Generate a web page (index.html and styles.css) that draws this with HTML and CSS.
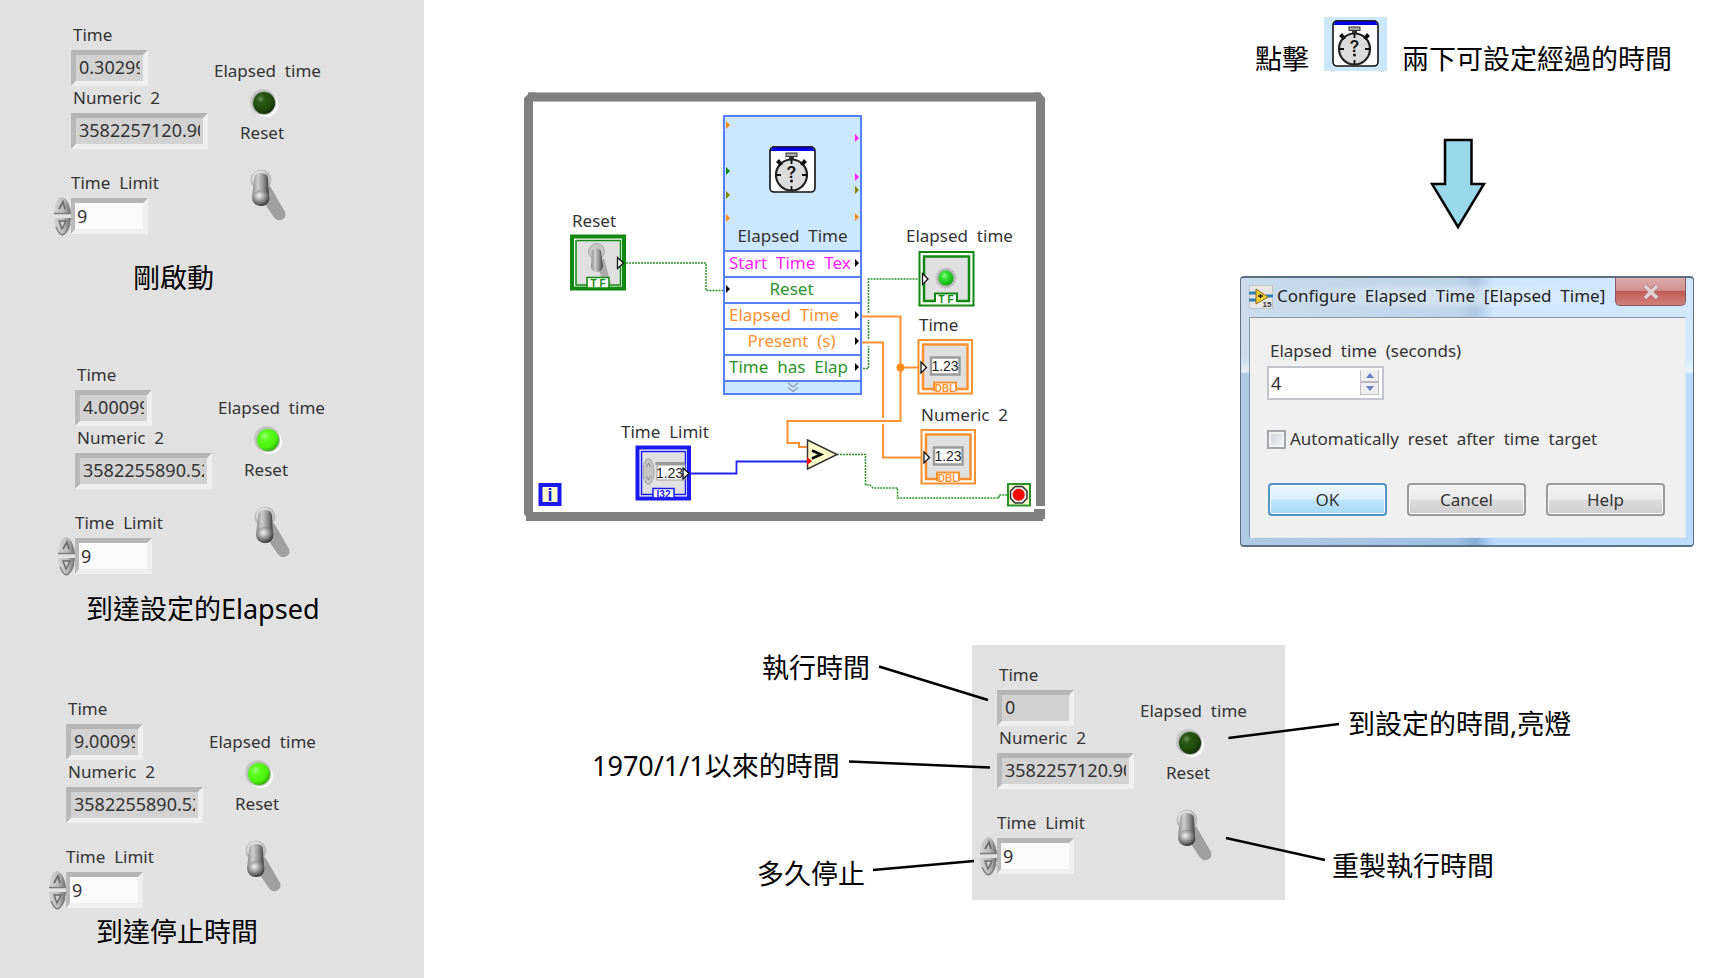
FILE: index.html
```html
<!DOCTYPE html>
<html lang="zh-Hant">
<head>
<meta charset="utf-8">
<title>Elapsed Time</title>
<link rel="stylesheet" href="styles.css">
</head>
<body>
<svg class="defs" aria-hidden="true">
  <defs>
    <radialGradient id="led-off" cx="0.35" cy="0.32" r="0.7">
      <stop offset="0" stop-color="#6f9460"/><stop offset="0.25" stop-color="#2c5a18"/><stop offset="0.7" stop-color="#1f4a0c"/><stop offset="1" stop-color="#12300a"/>
    </radialGradient>
    <radialGradient id="led-on" cx="0.35" cy="0.32" r="0.7">
      <stop offset="0" stop-color="#9cff7a"/><stop offset="0.3" stop-color="#5cff1e"/><stop offset="0.75" stop-color="#4bf00c"/><stop offset="1" stop-color="#33b808"/>
    </radialGradient>
    <radialGradient id="led-node" cx="0.4" cy="0.35" r="0.65">
      <stop offset="0" stop-color="#8cff8c"/><stop offset="0.4" stop-color="#2ee02e"/><stop offset="1" stop-color="#14a814"/>
    </radialGradient>
    <linearGradient id="lever" x1="0" x2="1" y1="0" y2="0">
      <stop offset="0" stop-color="#8a8a8a"/><stop offset="0.35" stop-color="#cfcfcf"/><stop offset="0.7" stop-color="#8c8c8c"/><stop offset="1" stop-color="#3c3c3c"/>
    </linearGradient>
    <radialGradient id="lever-tip" cx="0.4" cy="0.35" r="0.65">
      <stop offset="0" stop-color="#f4f4f4"/><stop offset="0.5" stop-color="#9a9a9a"/><stop offset="1" stop-color="#3a3a3a"/>
    </radialGradient>
    <linearGradient id="knob" x1="0" x2="1" y1="0" y2="0">
      <stop offset="0" stop-color="#d4d4d4"/><stop offset="0.55" stop-color="#bcbcbc"/><stop offset="1" stop-color="#6a6a6a"/>
    </linearGradient>
    <symbol id="led-dark" viewBox="0 0 32 32">
      <circle cx="15" cy="15" r="13" fill="#c6c6c6"/><circle cx="18" cy="18" r="12" fill="#fafafa"/><circle cx="16" cy="16" r="12" fill="#b0b0b0"/><circle cx="16" cy="16" r="11" fill="url(#led-off)"/>
    </symbol>
    <symbol id="led-lit" viewBox="0 0 32 32">
      <circle cx="15" cy="15" r="13" fill="#c6c6c6"/><circle cx="18" cy="18" r="12" fill="#fafafa"/><circle cx="16" cy="16" r="12" fill="#b0b8ac"/><circle cx="16" cy="16" r="11" fill="url(#led-on)"/>
    </symbol>
    <symbol id="switch" viewBox="0 0 40 56">
      <path d="M17 20 L21 18 L36 44 Q38 50 32 52 Q27 53 24 48 L14 33 Z" fill="#9f9f9f"/>
      <circle cx="12" cy="12" r="10.500" fill="#bdbdbd"/>
      <circle cx="11" cy="10.500" r="8" fill="#dcdcdc"/>
      <path d="M5 11 Q5 5 12 5 Q19 5 19 11 L20 29 Q20 38 12 38 Q3 38 3 29 Z" fill="url(#lever)"/>
      <ellipse cx="12" cy="30" rx="8.500" ry="8" fill="url(#lever-tip)"/>
    </symbol>
    <symbol id="spin" viewBox="0 0 18 40">
      <path d="M9 1 C14 2 17 9 18 18 H1 C1 9 4 2 9 1 Z" fill="url(#knob)"/>
      <path d="M1 22 H18 C17 31 14 38 9 39 C4 38 1 31 1 22 Z" fill="url(#knob)"/>
      <path d="M6 13 L10 6 L12 13" fill="none" stroke="#6b6b6b" stroke-width="1.8"/>
      <path d="M13 25 L9 33 L6 25 Z" fill="#d0d0d0" stroke="#6b6b6b" stroke-width="1.5"/>
      <path d="M1 17.500 H18 M3 31 Q6 38 9 39 Q14 38 17 28" fill="none" stroke="#7d7d7d" stroke-width="1.300"/>
    </symbol>
    <symbol id="stopwatch" viewBox="0 0 47 47">
      <rect x="1" y="1" width="45" height="45" rx="4" fill="#fff" stroke="#111" stroke-width="1.6"/>
      <path d="M3.5 1 H43.5 L45.5 5 H1.500 Z" fill="#0000e6"/>
      <path d="M3 1 H44" stroke="#111" stroke-width="1"/>
      <rect x="17" y="7" width="11" height="3.500" fill="#aaa" stroke="#333"/>
      <path d="M22.500 10 V14" stroke="#333" stroke-width="5"/>
      <circle cx="22.500" cy="29" r="15.500" fill="#dcdcdc" stroke="#222" stroke-width="2.200"/>
      <path d="M22.500 14 V18 M22.500 40 V44 M7 29 H12 M33 29 H38" stroke="#111" stroke-width="1.800"/>
      <path d="M7 16 L10 13 L14 18 L11 20 Z M38 16 L35 13 L31 18 L34 20 Z" fill="#111"/>
      <text x="22.500" y="32" class="watch-mark">?</text>
      <circle cx="22.500" cy="35" r="1.500" fill="#111"/>
    </symbol>
  </defs>
</svg>

<div class="page">
  <aside class="states">
    <section class="state state-start">
      <div class="cluster">
        <div class="fields">
          <span class="label">Time</span><output class="readout short"><span>0.30299</span></output>
          <span class="label">Numeric  2</span><output class="readout"><span>3582257120.90</span></output>
          <label class="label limit" for="limit1">Time  Limit</label>
          <svg class="spin"><use href="#spin"/></svg><input class="entry" id="limit1" value="9">
        </div>
        <div class="lamps">
          <span class="label">Elapsed  time</span><svg class="led"><use href="#led-dark"/></svg>
          <span class="label reset">Reset</span><button class="toggle" aria-label="Reset"><svg><use href="#switch"/></svg></button>
        </div>
      </div>
      <p class="note">剛啟動</p>
    </section>

    <section class="state state-elapsed">
      <div class="cluster">
        <div class="fields">
          <span class="label">Time</span><output class="readout short"><span>4.00099</span></output>
          <span class="label">Numeric  2</span><output class="readout"><span>3582255890.52</span></output>
          <label class="label limit" for="limit2">Time  Limit</label>
          <svg class="spin"><use href="#spin"/></svg><input class="entry" id="limit2" value="9">
        </div>
        <div class="lamps">
          <span class="label">Elapsed  time</span><svg class="led"><use href="#led-lit"/></svg>
          <span class="label reset">Reset</span><button class="toggle" aria-label="Reset"><svg><use href="#switch"/></svg></button>
        </div>
      </div>
      <p class="note">到達設定的Elapsed</p>
    </section>

    <section class="state state-stop">
      <div class="cluster">
        <div class="fields">
          <span class="label">Time</span><output class="readout short"><span>9.00099</span></output>
          <span class="label">Numeric  2</span><output class="readout"><span>3582255890.52</span></output>
          <label class="label limit" for="limit3">Time  Limit</label>
          <svg class="spin"><use href="#spin"/></svg><input class="entry" id="limit3" value="9">
        </div>
        <div class="lamps">
          <span class="label">Elapsed  time</span><svg class="led"><use href="#led-lit"/></svg>
          <span class="label reset">Reset</span><button class="toggle" aria-label="Reset"><svg><use href="#switch"/></svg></button>
        </div>
      </div>
      <p class="note">到達停止時間</p>
    </section>
  </aside>

  <main class="main">
    <section class="diagram">
      <svg class="wires" viewBox="524 92 521 429">
        <path d="M528.500 100 V514 M526 516.500 H1032 M528 97 H1041 M1040.500 100 V506" stroke="#808080" stroke-width="9" fill="none"/>
        <path d="M524 98 L530 92.500 H536 V101 H533 V106 H524 Z M1045 98 L1040 92.500 H1034 V101 H1036 V106 H1045 Z M524 514 L530 521 H536 V512 H524 Z" fill="#808080"/>
        <path d="M1032 512 H1034 V509 H1045 V519 H1043 V521 H1032 Z" fill="#808080"/>

        <g fill="none" stroke="#2b942b" stroke-width="1.500" stroke-dasharray="2 1">
          <path d="M626 263 H706 V290.500 H723"/>
          <path d="M863 368.500 H868.500 V346 M868.500 339 V320 M868.500 313 V279 H918"/>
          <path d="M837 454.500 H865.500 V485 H870 L873 488 H897.500 V498 H999 V495 H1007"/>
        </g>
        <g fill="none" stroke="#ff9130" stroke-width="2">
          <path d="M862 316.500 H900.500 V421 H787.500 V443 H799 V447 H808"/>
          <path d="M862 342.500 H883 V418 M883 424 V457.500 H921 M900 367.500 H918"/>
        </g>
        <circle cx="900.500" cy="367.500" r="4" fill="#ff8a1c"/>
        <path d="M690 473.500 H736.500 V461.500 H808" fill="none" stroke="#2424f0" stroke-width="1.800"/>
        <path d="M807.500 440 L837 454.500 L807.500 469 Z" fill="#ffffcc" stroke="#333" stroke-width="1.500"/>
        <path d="M812 450.500 L821 454.500 L812 458.500" fill="none" stroke="#000" stroke-width="2.500"/>
        <path d="M807 457 L812 461 L807 465 Z" fill="#f00"/>

        <g><rect x="572" y="236.500" width="52" height="52" fill="#fff" stroke="#118811" stroke-width="4"/>
          <rect x="576" y="240.500" width="44.500" height="44.500" fill="#e0e0e0" stroke="#118811" stroke-width="1.500"/>
          <path d="M598 266 L604 258 L611 284 H603 Z" fill="#aaa"/>
          <circle cx="596.500" cy="251.500" r="8" fill="#c6c6c6" stroke="#aaa"/><path d="M592 251 Q597 245 601 251 L603 266 Q602 272 597 272 Q591 272 591 266 Z" fill="url(#lever)"/>
          <path d="M587 288 V277.500 H609 V288 Z" fill="#fff" stroke="#118811" stroke-width="1.500"/><text x="598" y="287" class="tag green">T F</text>
          <path d="M617.500 257.500 L623.500 263 L617.500 268.500 Z" fill="#fff" stroke="#111" stroke-width="1.300"/>
        </g>
        <g><rect x="919.500" y="252" width="54" height="53.500" fill="#fff" stroke="#118811" stroke-width="2"/>
          <rect x="924" y="256.500" width="45" height="44.500" fill="#e0e0e0" stroke="#118811" stroke-width="2.500"/>
          <circle cx="946" cy="278" r="9.500" fill="#b4b4b4" stroke="#bcbcbc" stroke-width="2" stroke-dasharray="2 1"/><circle cx="946" cy="278" r="7.500" fill="url(#led-node)"/>
          <path d="M935 303 V293 H957 V303 Z" fill="#fff"/><path d="M935 302 V293.500 H957 V302" fill="none" stroke="#118811" stroke-width="2"/><text x="946" y="303" class="tag green">T F</text>
          <path d="M922.500 273.500 L928 279 L922.500 284.500 Z" fill="#fff" stroke="#111" stroke-width="1.300"/>
        </g>
        <g><rect x="918.500" y="340" width="53.500" height="53.500" fill="#fff" stroke="#ff9130" stroke-width="2"/>
          <rect x="923" y="344.500" width="44.500" height="44.500" fill="#e0e0e0" stroke="#ff9130" stroke-width="2.500"/>
          <rect x="931" y="357.500" width="28.500" height="17" fill="#fff" stroke="#9b9b9b" stroke-width="2.500"/><text x="945" y="371" class="digits">1.23</text>
          <path d="M934 391 V382.500 H956 V391" fill="#fff" stroke="#ff9130" stroke-width="2"/><text x="945" y="391.500" class="tag orange">DBL</text>
          <path d="M921 362 L926.500 367.500 L921 373 Z" fill="#fff" stroke="#111" stroke-width="1.300"/>
        </g>
        <g transform="translate(3 90)"><rect x="918.500" y="340" width="53.500" height="53.500" fill="#fff" stroke="#ff9130" stroke-width="2"/>
          <rect x="923" y="344.500" width="44.500" height="44.500" fill="#e0e0e0" stroke="#ff9130" stroke-width="2.500"/>
          <rect x="931" y="357.500" width="28.500" height="17" fill="#fff" stroke="#9b9b9b" stroke-width="2.500"/><text x="945" y="371" class="digits">1.23</text>
          <path d="M934 391 V382.500 H956 V391" fill="#fff" stroke="#ff9130" stroke-width="2"/><text x="945" y="391.500" class="tag orange">DBL</text>
          <path d="M921 362 L926.500 367.500 L921 373 Z" fill="#fff" stroke="#111" stroke-width="1.300"/>
        </g>
        <g><rect x="637.500" y="447.500" width="51.500" height="51" fill="#fff" stroke="#1a1af0" stroke-width="4"/>
          <rect x="641.500" y="451.500" width="44" height="43" fill="#e0e0e0" stroke="#1a1af0" stroke-width="1.500"/>
          <ellipse cx="648.500" cy="471.500" rx="5.500" ry="13" fill="#c4c4c4" stroke="#a6a6a6"/><path d="M646.500 467 L648.500 463 L650.500 467 M646.500 476 L648.500 480 L650.500 476" fill="none" stroke="#888"/>
          <path d="M655.500 463.500 H685" stroke="#9b9b9b" stroke-width="3"/><rect x="657" y="465" width="28" height="15" fill="#fff" stroke="#9b9b9b"/><text x="669.500" y="477.500" class="digits">1.23</text>
          <path d="M653 498 V488.500 H674 V498 Z" fill="#fff" stroke="#1a1af0" stroke-width="1.500"/><text x="663.500" y="497.500" class="tag blue">I32</text>
          <path d="M683 468 L689 473.500 L683 479 Z" fill="#fff" stroke="#111" stroke-width="1.300"/>
        </g>
        <rect x="540.500" y="485" width="19" height="19" fill="#ffffcc" stroke="#1a1af0" stroke-width="4"/><text x="550" y="500.500" class="index">i</text>
        <rect x="1008" y="484" width="22" height="21.500" fill="#ffffd0" stroke="#2b942b" stroke-width="2"/>
        <path d="M1015 486.500 H1022.500 L1027 491 V498.500 L1022.500 503 H1015 L1010.500 498.500 V491 Z" fill="#e6e6e6" stroke="#333" stroke-width="1.500"/><circle cx="1018.700" cy="494.700" r="6" fill="#f00"/>
      </svg>

      <span class="label node-reset">Reset</span>
      <span class="label node-limit">Time  Limit</span>
      <span class="label node-elapsed">Elapsed  time</span>
      <span class="label node-time">Time</span>
      <span class="label node-numeric">Numeric  2</span>

      <div class="vi">
        <div class="vi-head">
          <svg class="vi-icon"><use href="#stopwatch"/></svg>
          <span class="label">Elapsed  Time</span>
        </div>
        <div class="vi-row magenta"><span>Start  Time  Tex</span></div>
        <div class="vi-row green mid"><span>Reset</span></div>
        <div class="vi-row orange"><span>Elapsed  Time</span></div>
        <div class="vi-row orange mid"><span>Present  (s)</span></div>
        <div class="vi-row green"><span>Time  has  Elap</span></div>
        <div class="vi-foot"><svg viewBox="0 0 12 11"><path d="M1 1 L6 5 L11 1 M1 5.500 L6 9.500 L11 5.500" fill="none" stroke="#8fa3b5" stroke-width="1.500"/></svg></div>
        <svg class="vi-pins" viewBox="723 115 139 279">
          <path d="M726 121 L730 125 L726 129 Z M726 214 L730 218 L726 222 Z M855 213 L859 217 L855 221 Z" fill="#ff8a1c"/>
          <path d="M726 167 L730 171 L726 175 Z" fill="#118811"/>
          <path d="M726 191 L730 195 L726 199 Z M855 186 L859 190 L855 194 Z" fill="#858500"/>
          <path d="M855 134 L859 138 L855 142 Z M855 173 L859 177 L855 181 Z" fill="#ff1eff"/>
          <path d="M726 285 L730 289 L726 293 Z M855 259 L859 263 L855 267 Z M855 311 L859 315 L855 319 Z M855 337 L859 341 L855 345 Z M855 363 L859 367 L855 371 Z" fill="#000"/>
        </svg>
      </div>
    </section>

    <section class="guide">
      <p class="hint">點擊 <span class="hint-icon"><svg><use href="#stopwatch"/></svg></span> 兩下可設定經過的時間</p>
      <svg class="arrow" viewBox="0 0 56 92"><path d="M15 2 H41.500 V46 H54 L28 89 L2 46 H15 Z" fill="#99d9ea" stroke="#000" stroke-width="2.500"/></svg>

      <form class="dialog" onsubmit="return false">
        <header class="title">
          <svg class="app" viewBox="0 0 24 24"><rect x="0.500" y="0.500" width="23" height="23" fill="#e6e6e6" stroke="#c4c4c4"/><path d="M0 8 H8 M0 15 H8 M17 11 H24" stroke="#2c7fb8" stroke-width="3"/><path d="M7 4 L19 12 L7 19 Z" fill="#f8cf2e" stroke="#8a6d10"/><path d="M9 11 H14 M11.500 9 V13" stroke="#222" stroke-width="1.500"/><text x="18" y="22" class="app-mark">15</text></svg>
          <h1>Configure  Elapsed  Time  [Elapsed  Time]</h1>
          <button class="close" type="button" aria-label="Close"><svg viewBox="0 0 16 14"><path d="M2 1 L14 13 M14 1 L2 13" stroke="#a8797c" stroke-width="5"/><path d="M2 1 L14 13 M14 1 L2 13" stroke="#e6cfd2" stroke-width="3.500"/></svg></button>
        </header>
        <div class="client">
          <label class="label" for="secs">Elapsed  time  (seconds)</label>
          <div class="stepper">
            <input id="secs" value="4">
            <span class="steps"><button type="button" aria-label="Increase"><svg viewBox="0 0 8 5"><path d="M0 5 L4 0 L8 5 Z" fill="#6b7ec4"/></svg></button><button type="button" aria-label="Decrease"><svg viewBox="0 0 8 5"><path d="M0 0 L4 5 L8 0 Z" fill="#6b7ec4"/></svg></button></span>
          </div>
          <label class="check label"><input type="checkbox">Automatically  reset  after  time  target</label>
          <div class="actions"><button class="primary">OK</button><button type="button">Cancel</button><button type="button">Help</button></div>
        </div>
      </form>
    </section>

    <section class="figure">
      <div class="panel">
        <div class="cluster">
          <div class="fields">
            <span class="label">Time</span><output class="readout short"><span>0</span></output>
            <span class="label">Numeric  2</span><output class="readout"><span>3582257120.90</span></output>
            <label class="label limit" for="limit4">Time  Limit</label>
            <svg class="spin"><use href="#spin"/></svg><input class="entry" id="limit4" value="9">
          </div>
          <div class="lamps">
            <span class="label">Elapsed  time</span><svg class="led"><use href="#led-dark"/></svg>
            <span class="label reset">Reset</span><button class="toggle" aria-label="Reset"><svg><use href="#switch"/></svg></button>
          </div>
        </div>
      </div>
      <svg class="leaders" viewBox="592 644 980 255"><path d="M879 665.500 L988 699 M849 760.500 L990 766.500 M873 869 L974 860 M1228.500 737 L1339 723 M1226 837 L1325 859" stroke="#000" stroke-width="2.500" fill="none"/></svg>
      <span class="note call-run">執行時間</span>
      <span class="note call-epoch">1970/1/1以來的時間</span>
      <span class="note call-limit">多久停止</span>
      <span class="note call-lamp">到設定的時間,亮燈</span>
      <span class="note call-reset">重製執行時間</span>
    </section>
  </main>
</div>
</body>
</html>
```

FILE: styles.css
```css
* { box-sizing: border-box; }

body {
  margin: 0;
  background: #fff;
  color: #333;
  font: 17px/24px "Noto Sans", "Noto Sans CJK TC", sans-serif;
}

button, input { font: inherit; color: inherit; }
button { padding: 0; border: 0; background: none; }
svg { display: block; }
.defs { position: absolute; width: 0; height: 0; }

.page { display: flex; min-height: 100vh; }

.label { white-space: pre; }

.note {
  margin: 0;
  color: #000;
  font-size: 27px;
  line-height: 36px;
  white-space: nowrap;
}

/* Front panel states */
.states { flex: 0 0 424px; background: #e1e1e1; }
.state-start { padding: 23px 0 0 53px; }
.state-elapsed { padding: 67px 0 0 57px; }
.state-stop { padding: 70px 0 0 48px; }
.state-start .note { padding: 26px 0 0 80px; }
.state-elapsed .note { padding: 17px 0 0 29px; }
.state-stop .note { padding: 6px 0 0 48px; }

.cluster { display: flex; gap: 6px; }

.fields {
  display: grid;
  grid-template-columns: 18px 137px;
}
.fields .label, .readout, .entry { grid-column: 2; }
.fields .label { margin: 0 0 3px 2px; }
.fields .limit { margin: 22px 0 3px; }
.spin { grid-row: 6; grid-column: 1; width: 18px; height: 40px; margin-top: -2px; margin-bottom: -2px; }
.spin + .entry { grid-row: 6; }

.readout, .entry {
  height: 36px;
  border: 5px solid;
  border-color: #b5b5b5 #efefef #efefef #b9b9b9;
  background: #d2d2d2;
  font-size: 18px;
}
.readout { padding: 0 3px; }
.readout span { display: block; overflow: hidden; line-height: 24px; white-space: nowrap; }
.short, .entry { width: 77px; }
.entry { padding: 0 2px; border-left-width: 4px; background: #fafafa; outline: 0; }

.lamps { display: flex; flex-direction: column; align-items: flex-start; padding-top: 36px; }
.states .state-elapsed .lamps, .states .state-stop .lamps { padding-top: 33px; }
.led { width: 32px; height: 32px; margin: 4px 0 2px 34px; }
.reset { margin-left: 26px; }
.toggle { margin: 23px 0 -14px 35px; }
.toggle svg { width: 40px; height: 56px; }

/* Main area */
.main {
  flex: 1;
  display: grid;
  grid-template-columns: 1fr 454px;
  align-content: start;
  padding-right: 28px;
}

.diagram { position: relative; width: 521px; height: 429px; margin: 92px 0 0 100px; }
.wires { width: 100%; height: 100%; }
.diagram > .label { position: absolute; }
.node-reset { left: 48px; top: 117px; }
.node-limit { left: 97px; top: 328px; }
.node-elapsed { left: 382px; top: 132px; }
.node-time { left: 395px; top: 221px; }
.node-numeric { left: 397px; top: 311px; }

.tag { font: bold 10px "Liberation Sans", sans-serif; text-anchor: middle; }
.digits { font: 14px "Liberation Sans", sans-serif; text-anchor: middle; fill: #222; }
.index { font: bold 18px "Liberation Sans", sans-serif; text-anchor: middle; fill: #1a1ad0; }
.watch-mark { font: bold 16px "Liberation Sans", sans-serif; text-anchor: middle; fill: #111; }
.app-mark { font: bold 8px "Liberation Sans", sans-serif; text-anchor: middle; fill: #333; }

.green { color: #2b942b; fill: #118811; }
.orange { color: #ff9130; fill: #ff9130; }
.blue { fill: #1a1af0; }
.magenta { color: #ff1eff; }

.vi {
  position: absolute;
  left: 199px;
  top: 23px;
  width: 139px;
  border: 2px solid #5580f8;
  background: #fff;
}
.vi-head {
  display: flex;
  flex-direction: column;
  align-items: center;
  padding: 29px 0 2px;
  background: #cce8ff;
}
.vi-icon { width: 47px; height: 47px; }
.vi-head .label { margin-top: 31px; }
.vi-row {
  display: flex;
  height: 26px;
  padding: 0 6px 0 4px;
  border-top: 2px solid #5580f8;
}
.vi-row span { flex: 1; line-height: 22px; white-space: pre; }
.vi-row.mid { text-align: center; }
.vi-foot {
  display: flex;
  justify-content: center;
  height: 13px;
  border-top: 2px solid #5580f8;
  background: #cce8ff;
}
.vi-foot svg { width: 12px; height: 11px; }
.vi-pins { position: absolute; left: -2px; top: -2px; width: 139px; height: 279px; }

/* Hint, arrow and dialog */
.guide { padding-top: 17px; }
.hint {
  display: flex;
  align-items: flex-end;
  gap: 15px;
  margin: 0 0 0 15px;
  color: #000;
  font-size: 27px;
  line-height: 36px;
  white-space: nowrap;
}
.hint-icon { margin-bottom: 6px; padding: 3px 8px 4px; background: #cce8ff; }
.hint-icon svg { width: 47px; height: 47px; }
.arrow { width: 56px; height: 92px; margin: 61px 0 46px 190px; }

.dialog {
  border: 1px solid #5d6f80;
  border-width: 2px 1px;
  border-radius: 4px;
  padding: 0 7px 7px 8px;
  background:
    linear-gradient(#ffffff50 0, #ffffff60 30%, #ffffffb0 35%, #fff0 36%),
    linear-gradient(90deg, #b0cae4 0, #9fc0e2 48%, #86acd4 52%, #b9dbff 56%, #bbdcff 100%);
}
.title { display: flex; align-items: flex-start; height: 39px; }
.app { width: 24px; height: 24px; margin-top: 7px; }
.title h1 {
  flex: 1;
  margin: 5px 0 0 4px;
  font-size: 17px;
  font-weight: 400;
  line-height: 26px;
  white-space: pre;
  color: #222;
  background: radial-gradient(closest-side, #e6f0fa80 50%, #e6f0fa00);
}
.close {
  display: flex;
  align-items: center;
  justify-content: center;
  width: 71px;
  height: 28px;
  border: 1px solid #8c5560;
  border-top: 0;
  border-radius: 0 0 5px 5px;
  background: linear-gradient(#dcaaac, #d39391 45%, #c35c58 50%, #cf807a);
}
.close svg { width: 16px; height: 14px; }

.client {
  padding: 21px 20px 21px 17px;
  border: 1px solid #8496a8;
  border-color: #8496a8 #dfe9f2 #dfe9f2 #8496a8;
  background: #f0f0f0;
}
.client > .label { display: block; padding-left: 3px; }
.stepper {
  display: flex;
  width: 117px;
  height: 34px;
  margin-top: 3px;
  border: 2px solid #c4c4cc;
  background: #fff;
}
.stepper input {
  flex: 1;
  min-width: 0;
  padding: 0 2px;
  border: 0;
  background: none;
  outline: 0;
  font-size: 18px;
}
.steps { display: flex; flex-direction: column; width: 19px; margin: 2px 3px 3px 0; border: 1px solid #c0c0c8; border-top: 0; }
.steps button { flex: 1; display: flex; align-items: center; justify-content: center; background: #eee; }
.steps button + button { border-top: 2px solid #b8b8be; }
.steps svg { width: 8px; height: 5px; }

.client > .check { display: flex; align-items: center; gap: 4px; margin-top: 27px; padding: 0; }
.check input {
  appearance: none;
  width: 19px;
  height: 19px;
  margin: 0;
  border: 2px solid #a4a6aa;
  background: linear-gradient(135deg, #c8ccd2, #f8f8f8);
  box-shadow: inset 0 0 0 2px #f2f2f2;
}

.actions { display: flex; gap: 20px; margin-top: 32px; padding-left: 1px; }
.actions button {
  flex: 1;
  height: 33px;
  border: 2px solid #9a9a9a;
  border-radius: 4px;
  background: linear-gradient(#f3f3f3, #ebebeb 48%, #dcdcdc 52%, #cfcfcf);
  box-shadow: inset 0 0 0 1px #f8f8f8;
}
.actions .primary {
  border-color: #4f95c4;
  background: linear-gradient(#eaf6fd, #d9f0fc 48%, #bee6fd 52%, #a7d9f5);
}

/* Annotated panel */
.figure { position: relative; grid-column: 1 / -1; margin: 98px 0 0 168px; }
.panel { width: 313px; height: 255px; margin-left: 380px; padding: 18px 0 0 7px; background: #e1e1e1; }
.leaders { position: absolute; left: 0; top: 0; width: 980px; height: 255px; }
.figure > .note { position: absolute; }
.call-run { left: 170px; top: 5px; }
.call-epoch { left: 0; top: 103px; }
.call-limit { left: 165px; top: 211px; }
.call-lamp { left: 756px; top: 61px; }
.call-reset { left: 740px; top: 203px; }
```
